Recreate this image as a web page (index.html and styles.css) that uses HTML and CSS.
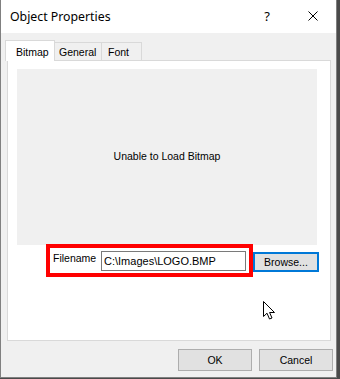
FILE: index.html
```html
<!DOCTYPE html>
<html lang="en">
<head>
  <meta charset="UTF-8" />
  <title>Object Properties</title>
  <link rel="stylesheet" href="styles.css">
</head>
<body>
  <div class="window">
    <div class="titlebar">
      <span class="title">Object Properties</span>
      <span class="tb-btn help">?</span>
      <span class="tb-btn close">
        <svg width="10" height="10" viewBox="0 0 10 10"><path d="M0.5 0.5 L9.5 9.5 M9.5 0.5 L0.5 9.5" stroke="#000" stroke-width="1" fill="none"/></svg>
      </span>
    </div>

    <div class="tabs">
      <div class="tab active tab-bitmap">Bitmap</div>
      <div class="tab tab-general">General</div>
      <div class="tab tab-font">Font</div>
    </div>

    <div class="panel">
      <div class="preview">Unable to Load Bitmap</div>
      <div class="file-row">
        <div class="highlight">
          <label for="filename">Filename</label>
          <input type="text" id="filename" value="C:\Images\LOGO.BMP" />
        </div>
        <button class="btn browse">Browse...</button>
      </div>
    </div>

    <div class="actions">
      <button class="btn">OK</button>
      <button class="btn">Cancel</button>
    </div>

    <svg class="cursor" width="14" height="20" viewBox="0 0 14 20">
      <path d="M0.5 0.5 L0.5 15.5 L4 12.2 L6.5 18 L9 17 L6.6 11.5 L11.5 11.5 Z" fill="#fff" stroke="#000" stroke-width="1" stroke-linejoin="miter"/>
    </svg>
  </div>
</body>
</html>
```

FILE: styles.css
```css
body {
  margin: 0;
  background: #4a4a4a;
  font-family: 'Liberation Sans', Arial, sans-serif;
  font-size: 10.5px;
  color: #000;
}
.window {
  position: relative;
  width: 337px;
  height: 378px;
  box-sizing: border-box;
  background: #f0f0f0;
  border: 1px solid #808080;
  border-top: none;
}
.titlebar {
  display: flex;
  align-items: center;
  height: 33px;
  background: #fff;
}
.title {
  flex: 1;
  padding-left: 9px;
  font-family: 'Noto Sans', sans-serif;
  font-size: 12.3px;
}
.tb-btn {
  width: 46px;
  height: 33px;
  display: flex;
  align-items: center;
  justify-content: center;
}
.help {
  font-family: 'Noto Sans', sans-serif;
  font-size: 13px;
  padding-bottom: 1px;
  box-sizing: border-box;
}
.close {
  padding-bottom: 2px;
  box-sizing: border-box;
}
.tabs {
  display: flex;
  align-items: flex-end;
  margin-top: 7px;
  padding-left: 4px;
}
.tab {
  height: 18px;
  box-sizing: border-box;
  border: 1px solid #d9d9d9;
  border-bottom: none;
  padding-top: 2px;
  line-height: 14px;
  background: #f0f0f0;
}
.tab + .tab {
  border-left: none;
}
.tab.active {
  position: relative;
  z-index: 1;
  height: 21px;
  margin-bottom: -1px;
  padding-top: 4px;
  background: #fff;
}
.tab-bitmap {
  width: 50px;
  padding-left: 10px;
}
.tab-general {
  width: 47px;
  padding-left: 4px;
}
.tab-font {
  width: 40px;
  padding-left: 6px;
}
.panel {
  margin-left: 6px;
  width: 324px;
  height: 281px;
  box-sizing: border-box;
  background: #fff;
  border: 1px solid #d9d9d9;
  padding: 8px 0 0 9px;
}
.preview {
  width: 300px;
  height: 176px;
  background: #f0f0f0;
  display: flex;
  align-items: center;
  justify-content: center;
  padding-bottom: 2px;
  box-sizing: border-box;
}
.file-row {
  display: flex;
  align-items: flex-start;
  margin: -1px 0 0 29px;
}
.highlight {
  display: flex;
  align-items: flex-start;
  width: 207px;
  height: 33px;
  box-sizing: border-box;
  border: 4px solid #ff0000;
  padding: 3px 3px 2px 3px;
}
.highlight label {
  width: 48px;
  flex: none;
  line-height: 13px;
  margin-top: 1px;
}
.highlight input {
  width: 145px;
  height: 20px;
  box-sizing: border-box;
  margin: 0;
  border: 1px solid #7a7a7a;
  padding: 0 2px;
  font-family: 'Liberation Sans', Arial, sans-serif;
  font-size: 11px;
  color: #000;
  outline: none;
}
.btn {
  width: 74px;
  height: 22px;
  box-sizing: border-box;
  margin: 0;
  padding: 0;
  background: #e1e1e1;
  border: 1px solid #adadad;
  font-family: 'Liberation Sans', Arial, sans-serif;
  font-size: 10.5px;
  color: #000;
}
.btn.browse {
  width: 66px;
  height: 20px;
  margin-top: 8px;
  border: 2px solid #0078d7;
}
.actions {
  display: flex;
  justify-content: flex-end;
  gap: 7px;
  margin-top: 8px;
  padding-right: 3px;
}
.cursor {
  position: absolute;
  left: 262px;
  top: 301px;
}
```
